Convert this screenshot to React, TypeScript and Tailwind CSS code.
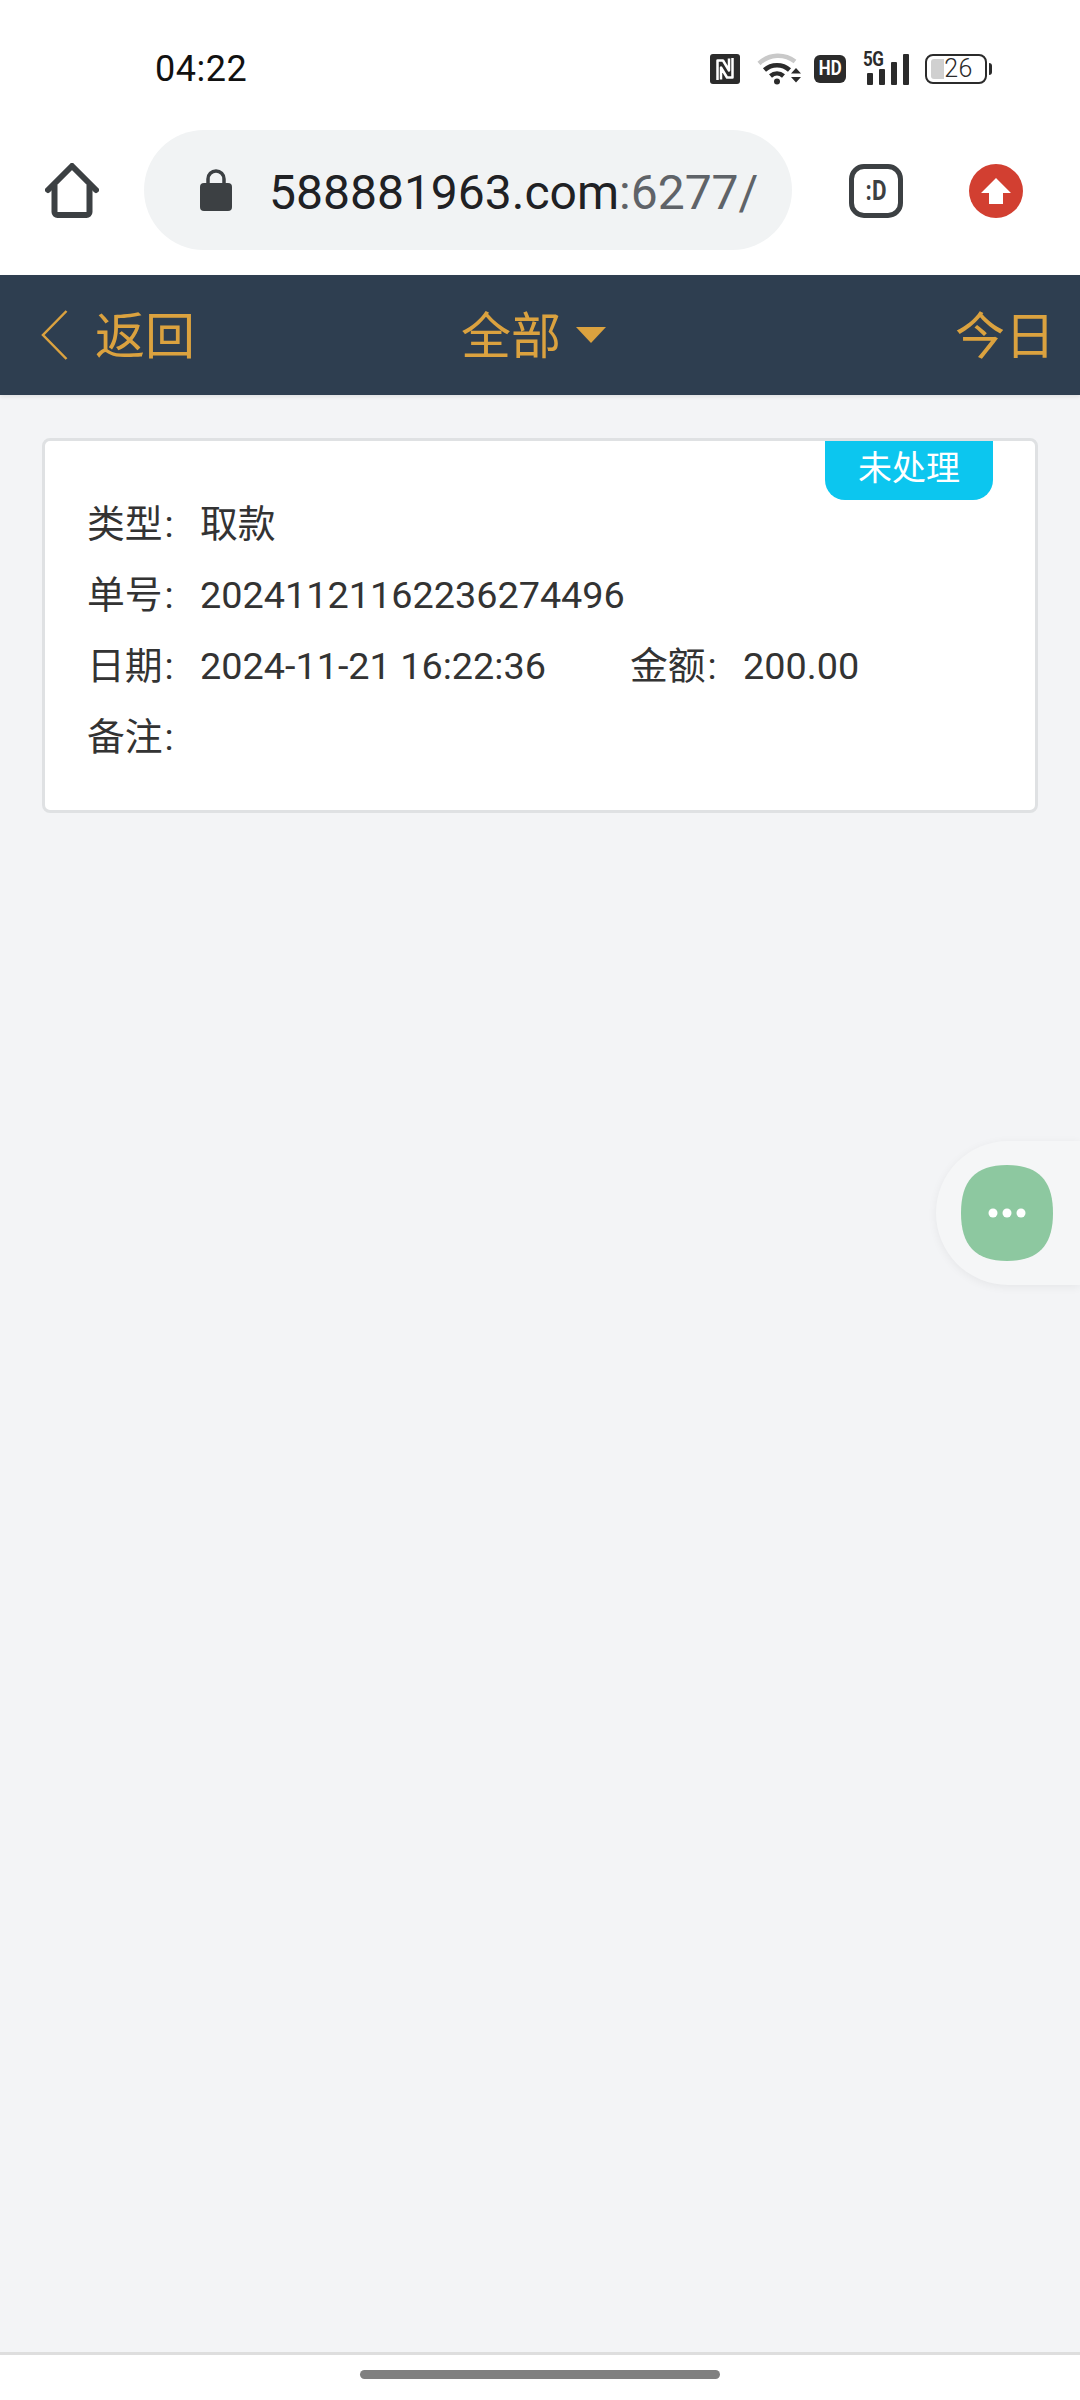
import React from 'react';

const cardFont = { fontFamily: 'Roboto, "Noto Sans CJK SC", sans-serif' };

const NfcIcon = () => (
  <svg width="30" height="30" viewBox="0 0 30 30">
    <rect width="30" height="30" rx="3" fill="#2b2b2b" />
    <path d="M7.500 26V6.500h5.500l6 10V4.500M22.500 4v19.500H17l-6-10V25.500" fill="none" stroke="#fff" strokeWidth="2.500" strokeLinejoin="round" />
  </svg>
);

const WifiIcon = () => (
  <svg width="46" height="33" viewBox="0 0 46 33">
    <path d="M2 11.500C12.500 1.500 27.500 1.500 38 9.500" fill="none" stroke="#c9c9c9" strokeWidth="4.500" />
    <path d="M7.500 18C14.500 11.500 25.500 11.500 32.500 18" fill="none" stroke="#2b2b2b" strokeWidth="4.500" />
    <path d="M13.500 24C17.500 20.500 22.500 20.500 26.500 24" fill="none" stroke="#2b2b2b" strokeWidth="4.500" />
    <circle cx="20" cy="29.500" r="3" fill="#2b2b2b" />
    <path d="M34 21.500h10l-5-5.500zM34 25h10l-5 5.500z" fill="#2b2b2b" />
  </svg>
);

const CellIcon = () => (
  <div className="relative h-[33px] w-[46px]">
    <span className="absolute left-0 top-[-2px] origin-left scale-x-[0.85] text-[20px] leading-[18px] font-bold tracking-[-0.5px] text-[#2b2b2b]" style={{ fontFamily: 'Roboto, sans-serif' }}>5G</span>
    <svg className="absolute left-0 top-0" width="46" height="33" viewBox="0 0 46 33">
      <rect x="4" y="21" width="6" height="12" rx="1" fill="#2b2b2b" />
      <rect x="16" y="17" width="6" height="16" rx="1" fill="#2b2b2b" />
      <rect x="28" y="10" width="6" height="23" rx="1" fill="#2b2b2b" />
      <rect x="40" y="2" width="6" height="31" rx="1" fill="#2b2b2b" />
    </svg>
  </div>
);

const Battery = () => (
  <div className="flex items-center gap-[2px]">
    <div className="relative flex h-[30px] w-[62px] items-center justify-center overflow-hidden rounded-[8px] border-2 border-[#2b2b2b]">
      <div className="absolute left-[4px] top-[3px] bottom-[3px] w-[13px] rounded-l-[3px] bg-[#d0d0d0]" />
      <span className="relative pl-[5px] text-[25px] leading-none font-light tracking-[0.5px] text-[#2b2b2b]" style={{ fontFamily: 'Roboto, sans-serif' }}>26</span>
    </div>
    <div className="h-[12px] w-[3px] rounded-r-sm bg-[#2b2b2b]" />
  </div>
);

const HomeIcon = () => (
  <svg width="54" height="55" viewBox="0 0 54 55">
    <path d="M3 27 27 3l24 24" fill="none" stroke="#3c4043" strokeWidth="6" strokeLinecap="round" strokeLinejoin="round" />
    <path d="M9.500 22v27a3 3 0 0 0 3 3h29a3 3 0 0 0 3-3V22" fill="none" stroke="#3c4043" strokeWidth="6" />
  </svg>
);

const LockIcon = () => (
  <svg width="32" height="42" viewBox="0 0 32 42">
    <path d="M8 16V10a8 8 0 0 1 16 0v6" fill="none" stroke="#3c4043" strokeWidth="3.500" />
    <rect x="0" y="14" width="32" height="28" rx="4" fill="#3c4043" />
  </svg>
);

const UpdateIcon = () => (
  <svg width="54" height="54" viewBox="0 0 54 54">
    <circle cx="27" cy="27" r="27" fill="#d23f31" />
    <path d="M27 14 42 29H34V40H20V29H12z" fill="#fff" />
  </svg>
);

const Label = ({ text }: { text: string }) => (
  <span className="w-[113px] shrink-0 whitespace-nowrap">
    {text}<span className="ml-[2px]">:</span>
  </span>
);

const Row = ({ label, value }: { label: string; value?: string }) => (
  <div className="flex">
    <Label text={label} />
    <span>{value}</span>
  </div>
);

export default function App() {
  return (
    <div className="relative flex h-[2400px] w-[1080px] flex-col overflow-hidden bg-[#f3f4f6]">
      {/* status bar */}
      <div className="flex h-[130px] items-start bg-white pt-[54px] pl-[155px]">
        <span className="text-[36px] leading-[30px] tracking-[0.5px] text-[#111]" style={{ fontFamily: 'Roboto, sans-serif' }}>04:22</span>
        <div className="ml-auto mr-[88px] flex h-[33px] -translate-y-[2px] items-center">
          <NfcIcon />
          <div className="ml-[17px]"><WifiIcon /></div>
          <div className="ml-[11px] flex h-[28px] w-[32px] items-center justify-center rounded-[6px] bg-[#2b2b2b] text-white">
            <span className="scale-x-[0.8] text-[21px] leading-none font-bold" style={{ fontFamily: 'Roboto, sans-serif' }}>HD</span>
          </div>
          <div className="ml-[17px]"><CellIcon /></div>
          <div className="ml-[16px]"><Battery /></div>
        </div>
      </div>

      {/* browser toolbar */}
      <div className="flex h-[145px] items-start bg-white">
        <div className="ml-[45px] mt-[33px] flex"><HomeIcon /></div>
        <div className="ml-[45px] flex h-[120px] w-[648px] items-center rounded-[60px] bg-[#f1f3f4] pl-[56px]">
          <LockIcon />
          <span className="ml-[37px] pt-[5px] text-[48px] leading-none whitespace-nowrap text-[#202124]" style={{ fontFamily: 'Roboto, sans-serif' }}>
            588881963.com<span className="text-[#5f6368]">:6277/</span>
          </span>
        </div>
        <div className="ml-[57px] mt-[34px] flex h-[54px] w-[54px] items-center justify-center rounded-[15px] border-[5px] border-[#3c4043] text-[#3c4043]">
          <span className="scale-x-[0.8] text-[28px] leading-none font-bold" style={{ fontFamily: 'Roboto, sans-serif' }}>:D</span>
        </div>
        <div className="ml-[66px] mt-[34px] flex"><UpdateIcon /></div>
      </div>

      {/* page header */}
      <header className="flex h-[120px] items-center bg-[#2e3e50] pr-[25px] pl-[41px] text-[50px] leading-none text-[#dba23f] shadow-[0_2px_4px_rgba(0,0,0,0.08)]" style={{ fontFamily: '"Noto Sans CJK SC", sans-serif' }}>
        <div className="flex w-[420px] items-center">
          <svg width="27" height="50" viewBox="0 0 27 50">
            <path d="M25.500 1 2 25l23.500 24" fill="none" stroke="#dba23f" strokeWidth="2.500" />
          </svg>
          <span className="ml-[27px] pb-[7px]">返回</span>
        </div>
        <div className="flex items-center">
          <span className="pb-[7px]">全部</span>
          <svg className="ml-[15px]" width="30" height="16" viewBox="0 0 30 16">
            <path d="M0 0h30L15 16z" fill="#dba23f" />
          </svg>
        </div>
        <span className="ml-auto pb-[7px]">今日</span>
      </header>

      {/* order card */}
      <main className="flex-1 px-[42px] pt-[43px]">
        <div className="relative h-[375px] rounded-[8px] border-[3px] border-[#dfe1e3] bg-white pt-[48px] pl-[42px] text-[37.8px] leading-[71px] text-[#333]" style={cardFont}>
          <div className="absolute top-0 right-[42px] flex h-[59px] w-[168px] items-center justify-center rounded-b-[20px] bg-[#0cc6ef] pb-[5px] text-[34px] leading-none text-white">未处理</div>
          <Row label="类型" value="取款" />
          <Row label="单号" value="20241121162236274496" />
          <div className="flex">
            <Label text="日期" />
            <span className="w-[430px] shrink-0 whitespace-nowrap">2024-11-21 16:22:36</span>
            <Label text="金额" />
            <span>200.00</span>
          </div>
          <Row label="备注" />
        </div>
      </main>

      {/* bottom nav */}
      <div className="flex h-[48px] justify-center border-t-[3px] border-[#dedede] bg-white pt-[15px]">
        <div className="h-[9px] w-[360px] rounded-full bg-[#808080]" />
      </div>

      {/* floating button */}
      <div className="absolute top-[1141px] right-0 flex h-[144px] w-[144px] items-center rounded-l-[72px] bg-[#f5f6f7] pl-[25px] shadow-[0_2px_10px_rgba(0,0,0,0.06)]">
        <svg width="92" height="96" viewBox="0 0 92 96">
          <path d="M46 0C78 0 92 16 92 48S78 96 46 96 0 80 0 48 14 0 46 0z" fill="#8dc8a0" />
          <circle cx="32" cy="48" r="4.500" fill="#fff" />
          <circle cx="46" cy="48" r="4.500" fill="#fff" />
          <circle cx="60" cy="48" r="4.500" fill="#fff" />
        </svg>
      </div>
    </div>
  );
}
